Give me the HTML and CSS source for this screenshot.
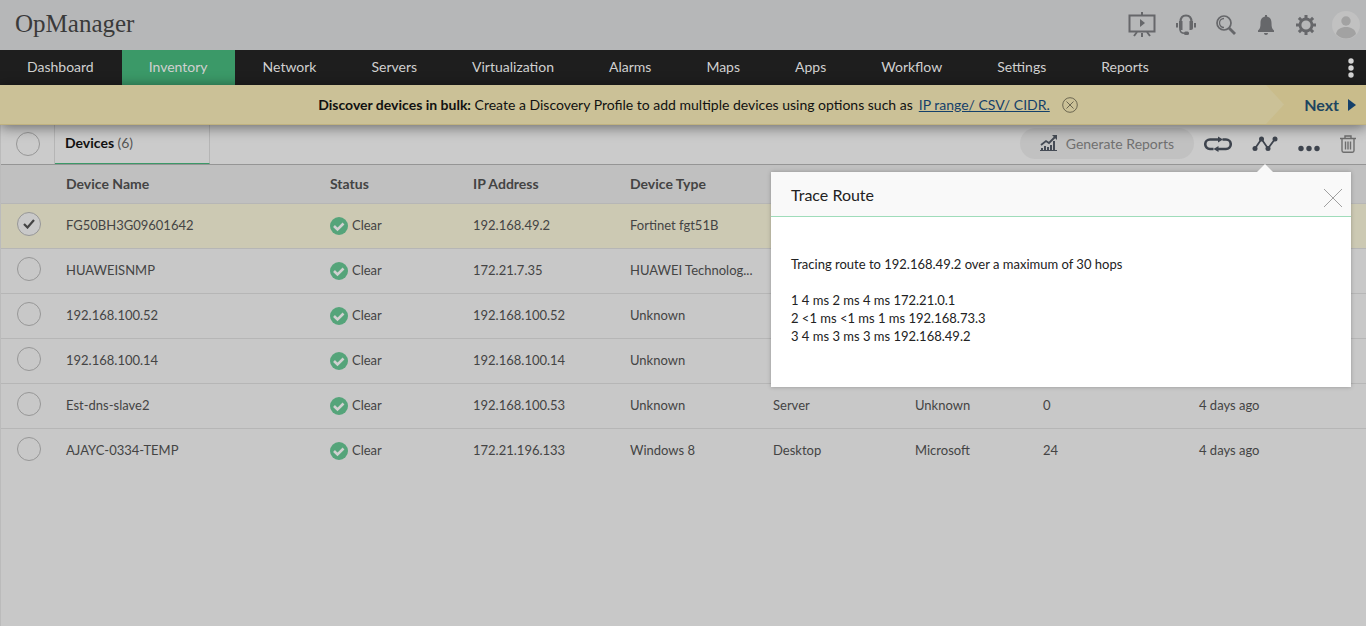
FILE: index.html
```
<!DOCTYPE html>
<html lang="en">
<head>
    <meta charset="UTF-8">
    <meta name="viewport" content="width=device-width, initial-scale=1.0">
    <title>OpManager</title>
    <link rel="stylesheet" href="styles.css">
</head>
<body>

    <!-- Top bar -->
    <header class="topbar">
        <div class="brand">OpManager</div>
        <div class="top-icons">
            <button type="button" class="icon-btn" aria-label="Presentation">
                <svg width="28" height="26" viewBox="0 0 28 26"><path d="M1.500 3.500h25v16h-25z" fill="none" stroke="#66676a" stroke-width="2"/><path d="M13 0h2v3h-2zM13 21h2v4h-2zM12 7l5 4-5 4z" fill="#66676a"/><path d="M9 20l-3 4M19 20l3 4" stroke="#66676a" stroke-width="2"/></svg>
            </button>
            <button type="button" class="icon-btn" aria-label="Support">
                <svg width="20" height="22" viewBox="0 0 20 22"><path d="M4.500 8C4.500 3.500 6.500 1.500 10 1.500S15.500 3.500 15.500 8" fill="none" stroke="#66676a" stroke-width="2.200"/><path d="M4 15c0 3 1.500 4.300 4.500 4.300" fill="none" stroke="#66676a" stroke-width="1.600"/><path d="M3 7h3.500v9H5c-1.200 0-2-.8-2-2zM13.500 7H17v7c0 1.200-.8 2-2 2h-1.500zM0 9h2v4.500H0zM18 9h2v4.500h-2z" fill="#66676a"/><rect x="8" y="17.500" width="5" height="3.500" rx="1.500" fill="#66676a"/></svg>
            </button>
            <button type="button" class="icon-btn" aria-label="Search">
                <svg width="20" height="20" viewBox="0 0 20 20"><circle cx="8" cy="8" r="7" fill="none" stroke="#66676a" stroke-width="1.700"/><path d="M8 3.500a4.500 4.500 0 0 0 0 9" fill="none" stroke="#66676a" stroke-width="1.300"/><path d="M13 13l6 6" stroke="#66676a" stroke-width="2.800"/></svg>
            </button>
            <button type="button" class="icon-btn" aria-label="Notifications">
                <svg width="20" height="20" viewBox="0 0 20 20"><path d="M9 0h2v1.500c3.500.8 4.500 3.500 4.500 6.500 0 4 .5 6 2.500 7.500V17H2v-1.500C4 14 4.500 12 4.500 8c0-3 1-5.700 4.500-6.500zM8 18h4c0 1.200-.8 2-2 2s-2-.8-2-2z" fill="#66676a"/></svg>
            </button>
            <button type="button" class="icon-btn" aria-label="Settings">
                <svg width="20" height="20" viewBox="0 0 20 20"><circle cx="10" cy="10" r="6" fill="none" stroke="#66676a" stroke-width="2.800"/><path d="M10 0v4M10 16v4M0 10h4M16 10h4M2.900 2.900l2.900 2.900M14.200 14.200l2.900 2.900M17.100 2.900l-2.900 2.900M5.800 14.200l-2.900 2.900" stroke="#66676a" stroke-width="3"/></svg>
            </button>
        </div>
        <button type="button" class="icon-btn" aria-label="Profile">
            <svg width="28" height="28" viewBox="0 0 28 28"><circle cx="14" cy="14" r="14" fill="#c1c1c1"/><circle cx="14" cy="10" r="4.700" fill="#a2a2a2"/><path d="M4 23c1-5 5-7 10-7s9 2 10 7c-5.500 6-14.500 6-20 0z" fill="#a2a2a2"/></svg>
        </button>
    </header>

    <!-- Main menu -->
    <nav class="menu">
        <a href="#">Dashboard</a>
        <a href="#" class="active">Inventory</a>
        <a href="#">Network</a>
        <a href="#">Servers</a>
        <a href="#">Virtualization</a>
        <a href="#">Alarms</a>
        <a href="#">Maps</a>
        <a href="#">Apps</a>
        <a href="#">Workflow</a>
        <a href="#">Settings</a>
        <a href="#">Reports</a>
        <button type="button" class="icon-btn menu-more" aria-label="More">
            <svg width="6" height="20" viewBox="0 0 6 20"><circle cx="3" cy="3" r="2.700" fill="#d4d4d4"/><circle cx="3" cy="10" r="2.700" fill="#d4d4d4"/><circle cx="3" cy="17" r="2.700" fill="#d4d4d4"/></svg>
        </button>
    </nav>

    <!-- Discovery banner -->
    <div class="banner">
        <div class="banner-text">
            <span><strong>Discover devices in bulk:</strong> Create a Discovery Profile to add multiple devices using options such as</span>
            <a href="#">IP range/ CSV/ CIDR.</a>
            <button type="button" class="icon-btn" aria-label="Dismiss">
                <svg width="16" height="16" viewBox="0 0 16 16" fill="none" stroke="#6b6650"><circle cx="8" cy="8" r="7.300"/><path d="M4.500 4.500l7 7M11.500 4.500l-7 7"/></svg>
            </button>
        </div>
        <button type="button" class="next">Next
            <svg width="8" height="12" viewBox="0 0 8 12"><path d="M0 0l8 6-8 6z" fill="#14406a"/></svg>
        </button>
    </div>

    <main class="inventory">
        <div class="toolbar">
            <div class="select-all"><input type="checkbox" class="check" aria-label="Select all"></div>
            <a href="#" class="tab">Devices <span>(6)</span></a>
            <div class="tools">
                <button type="button" class="report-btn">
                    <svg width="18" height="17" viewBox="0 0 18 17"><path d="M1 10l5-4 3 2 6-6" fill="none" stroke="#454b55" stroke-width="1.800"/><path d="M12 0h5v5zM1 13h2v2H1zM4 11h2v4H4zM7 12h2v3H7zM10 10h2v5h-2zM13 6h2v9h-2zM0 15h17v1H0z" fill="#454b55"/></svg>
                    Generate Reports
                </button>
                <button type="button" class="icon-btn" aria-label="Ping">
                    <svg width="28" height="16" viewBox="0 0 28 16"><path d="M9.500 13H6A4.700 4.700 0 0 1 6 3.500H15M18.500 3.500H22A4.700 4.700 0 0 1 22 13H13" fill="none" stroke="#3e444e" stroke-width="2.600"/><path d="M14 .5l5 3-5 3zM14.500 10l-5 3 5 3z" fill="#3e444e"/></svg>
                </button>
                <button type="button" class="icon-btn" aria-label="Trace Route">
                    <svg width="26" height="16" viewBox="0 0 26 16"><path d="M3 12.500L9.500 3 16 12.500 23 3" fill="none" stroke="#3e444e" stroke-width="1.800"/><circle cx="3" cy="12.500" r="2.500" fill="#3e444e"/><circle cx="9.500" cy="3" r="2.500" fill="#3e444e"/><circle cx="16" cy="12.500" r="2.500" fill="#3e444e"/><circle cx="23" cy="3" r="2.500" fill="#3e444e"/></svg>
                </button>
                <button type="button" class="icon-btn" aria-label="More actions">
                    <svg width="22" height="16" viewBox="0 0 22 16"><circle cx="3" cy="12.500" r="2.700" fill="#3e444e"/><circle cx="11" cy="12.500" r="2.700" fill="#3e444e"/><circle cx="19" cy="12.500" r="2.700" fill="#3e444e"/></svg>
                </button>
                <button type="button" class="icon-btn" aria-label="Delete">
                    <svg width="16" height="18" viewBox="0 0 16 18" fill="none" stroke="#6e6e6e" stroke-width="1.400"><path d="M0 3.500h16M5 3V1h6v2M2 4v11.500c0 1 .5 1.700 1.500 1.700h9c1 0 1.500-.7 1.500-1.700V4M5.500 6.500v8M8 6.500v8M10.500 6.500v8"/></svg>
                </button>
            </div>
        </div>

        <!-- Device list -->
        <table class="devices">
            <colgroup>
                <col class="col-check">
                <col class="col-name">
                <col class="col-status">
                <col class="col-ip">
                <col class="col-type">
                <col class="col-category">
                <col class="col-vendor">
                <col class="col-count">
                <col>
            </colgroup>
            <thead>
                <tr>
                    <th></th>
                    <th>Device Name</th>
                    <th>Status</th>
                    <th>IP Address</th>
                    <th>Device Type</th>
                    <th></th>
                    <th></th>
                    <th></th>
                    <th></th>
                </tr>
            </thead>
            <tbody>
                <tr class="selected">
                    <td><input type="checkbox" class="check" aria-label="FG50BH3G09601642" checked></td>
                    <td>FG50BH3G09601642</td>
                    <td><span class="status">Clear</span></td>
                    <td>192.168.49.2</td>
                    <td>Fortinet fgt51B</td>
                    <td></td>
                    <td></td>
                    <td></td>
                    <td></td>
                </tr>
                <tr>
                    <td><input type="checkbox" class="check" aria-label="HUAWEISNMP"></td>
                    <td>HUAWEISNMP</td>
                    <td><span class="status">Clear</span></td>
                    <td>172.21.7.35</td>
                    <td>HUAWEI Technolog...</td>
                    <td></td>
                    <td></td>
                    <td></td>
                    <td></td>
                </tr>
                <tr>
                    <td><input type="checkbox" class="check" aria-label="192.168.100.52"></td>
                    <td>192.168.100.52</td>
                    <td><span class="status">Clear</span></td>
                    <td>192.168.100.52</td>
                    <td>Unknown</td>
                    <td></td>
                    <td></td>
                    <td></td>
                    <td></td>
                </tr>
                <tr>
                    <td><input type="checkbox" class="check" aria-label="192.168.100.14"></td>
                    <td>192.168.100.14</td>
                    <td><span class="status">Clear</span></td>
                    <td>192.168.100.14</td>
                    <td>Unknown</td>
                    <td></td>
                    <td></td>
                    <td></td>
                    <td></td>
                </tr>
                <tr>
                    <td><input type="checkbox" class="check" aria-label="Est-dns-slave2"></td>
                    <td>Est-dns-slave2</td>
                    <td><span class="status">Clear</span></td>
                    <td>192.168.100.53</td>
                    <td>Unknown</td>
                    <td>Server</td>
                    <td>Unknown</td>
                    <td>0</td>
                    <td>4 days ago</td>
                </tr>
                <tr>
                    <td><input type="checkbox" class="check" aria-label="AJAYC-0334-TEMP"></td>
                    <td>AJAYC-0334-TEMP</td>
                    <td><span class="status">Clear</span></td>
                    <td>172.21.196.133</td>
                    <td>Windows 8</td>
                    <td>Desktop</td>
                    <td>Microsoft</td>
                    <td>24</td>
                    <td>4 days ago</td>
                </tr>
            </tbody>
        </table>

        <!-- Trace route popup -->
        <section class="popup" role="dialog" aria-labelledby="popupTitle">
            <div class="popup-head">
                <h2 id="popupTitle">Trace Route</h2>
                <button type="button" class="icon-btn" aria-label="Close">
                    <svg width="20" height="20" viewBox="0 0 20 20"><path d="M1 1l18 18M19 1L1 19" stroke="#a0a0a0"/></svg>
                </button>
            </div>
            <div class="popup-body">
                <p>Tracing route to 192.168.49.2 over a maximum of 30 hops</p>
                <p>1 4 ms 2 ms 4 ms 172.21.0.1<br>
                2 &lt;1 ms &lt;1 ms 1 ms 192.168.73.3<br>
                3 4 ms 3 ms 3 ms 192.168.49.2</p>
            </div>
        </section>
    </main>

</body>
</html>
```
FILE: styles.css
```
* {
    box-sizing: border-box;
}

body {
    display: flex;
    flex-direction: column;
    min-height: 100vh;
    margin: 0;
    font-family: Lato, "Liberation Sans", sans-serif;
    font-size: 14px;
    line-height: 18px;
    color: #444;
    background-color: #c8c8c8;
}

button {
    padding: 0;
    border: none;
    background: none;
    font-family: inherit;
    cursor: pointer;
}

.icon-btn {
    display: flex;
    flex-shrink: 0;
}

/* Top bar */
.topbar {
    display: flex;
    align-items: center;
    gap: 16px;
    height: 50px;
    padding: 0 6px 0 15px;
    background-color: #b6b7b8;
}

.brand {
    flex: 1;
    padding-bottom: 3px;
    font-family: "Roboto Slab", "Liberation Serif", serif;
    font-size: 25px;
    font-weight: 300;
    line-height: 30px;
    color: #3a3a3a;
}

.top-icons {
    display: flex;
    align-items: center;
    gap: 20px;
}

/* Main menu */
.menu {
    display: flex;
    gap: 1px;
    height: 35px;
    padding-right: 12px;
    background-color: #1e1e1e;
}

.menu a {
    padding: 0 27px;
    font-size: 14px;
    line-height: 34px;
    color: #d0d0d0;
    text-decoration: none;
}

.menu a.active {
    background-color: #3b9968;
}

.menu-more {
    align-items: center;
    margin-left: auto;
}

/* Discovery banner */
.banner {
    position: relative;
    z-index: 1;
    display: grid;
    grid-template-columns: 130px 1fr 100px;
    height: 40px;
    background-color: #cbc197;
    border-bottom: 1px solid #c0b27f;
    box-shadow: 0 2px 14px rgba(0, 0, 0, 0.5);
    color: #111;
}

.banner-text {
    grid-column: 2;
    display: flex;
    align-items: center;
    justify-content: center;
    gap: 6px;
    white-space: nowrap;
}

.banner-text a {
    margin-right: 6px;
    color: #14406a;
}

.next {
    display: flex;
    align-items: center;
    justify-content: flex-end;
    gap: 9px;
    padding-right: 10px;
    font-size: 16px;
    font-weight: bold;
    color: #1d4560;
    background-color: #c9bc8b;
    clip-path: polygon(0 0, 100% 0, 100% 100%, 0 100%, 18px 50%);
}

/* Toolbar */
.inventory {
    position: relative;
    flex: 1;
    border-left: 1px solid #bbb;
}

.toolbar {
    display: flex;
    height: 40px;
    border-bottom: 1px solid #959595;
    background-color: #cbcbcb;
}

.select-all {
    display: flex;
    align-items: center;
    width: 54px;
    padding: 0 0 2px 15px;
    border-right: 1px solid #b5b5b5;
}

.tab {
    width: 155px;
    padding: 9px 10px;
    border-right: 1px solid #b5b5b5;
    border-bottom: 1px solid #3b9968;
    font-weight: bold;
    color: #111;
    text-decoration: none;
}

.tab span {
    font-weight: normal;
    color: #555;
}

.tools {
    display: flex;
    align-items: center;
    gap: 20px;
    margin-left: auto;
    padding: 0 10px 2px 0;
}

.report-btn {
    display: flex;
    align-items: center;
    gap: 8px;
    height: 31px;
    margin-right: -10px;
    padding: 0 20px;
    border-radius: 16px;
    font-size: 14px;
    color: #707070;
    background-color: #c1c1c1;
}

.check {
    appearance: none;
    display: block;
    width: 24px;
    height: 24px;
    margin: 0;
    border: 1px solid #979797;
    border-radius: 50%;
}

.check:checked {
    background: #c9c9c9 url("data:image/svg+xml,%3Csvg xmlns='http://www.w3.org/2000/svg' viewBox='0 0 12 10'%3E%3Cpath d='M1 5l3.500 3.500L11 1' fill='none' stroke='%23444' stroke-width='2.200'/%3E%3C/svg%3E") center / 12px 10px no-repeat;
}

/* Device list */
.devices {
    width: 100%;
    table-layout: fixed;
    border-collapse: collapse;
}

.col-check { width: 65px; }
.col-name { width: 264px; }
.col-status { width: 143px; }
.col-ip { width: 157px; }
.col-type { width: 143px; }
.col-category { width: 142px; }
.col-vendor { width: 128px; }
.col-count { width: 156px; }

.devices th {
    height: 38px;
    padding: 0;
    font-weight: bold;
    text-align: left;
    background-color: #c0c0c0;
}

.devices td {
    height: 45px;
    padding: 0 0 2px;
    border-top: 1px solid #b6b6b6;
    font-size: 13px;
    white-space: nowrap;
}

.devices td:first-child {
    padding: 0 0 4px 16px;
}

.devices .selected {
    background-color: #ccc9b3;
}

.status {
    display: flex;
    align-items: center;
    gap: 4px;
}

.status::before {
    content: "";
    width: 18px;
    height: 18px;
    margin-top: 2px;
    background: url("data:image/svg+xml,%3Csvg xmlns='http://www.w3.org/2000/svg' viewBox='0 0 18 18'%3E%3Ccircle cx='9' cy='9' r='9' fill='%2355a47a'/%3E%3Cpath d='M4 9l3.500 3.500L13.500 6.500' fill='none' stroke='%23d0d0d0' stroke-width='2.600'/%3E%3C/svg%3E");
}

/* Trace route popup */
.popup {
    position: absolute;
    top: 47px;
    right: 15px;
    width: 580px;
    color: #222;
    background-color: #fff;
    box-shadow: 0 0 4px rgba(0, 0, 0, 0.25);
}

.popup::before {
    content: "";
    position: absolute;
    top: -8px;
    right: 78px;
    border: 8px solid transparent;
    border-top: 0;
    border-bottom-color: #f9f9f9;
}

.popup-head {
    display: flex;
    align-items: center;
    justify-content: space-between;
    height: 45px;
    padding: 2px 8px 0 20px;
    border-bottom: 1px solid #9fdcba;
    background-color: #f9f9f9;
}

.popup-head h2 {
    margin: 0;
    font-size: 16px;
    font-weight: normal;
}

.popup-head .icon-btn {
    padding-top: 6px;
}

.popup-body {
    padding: 38px 20px 24px;
    font-size: 13px;
}

.popup-body p {
    margin: 0 0 18px;
}
```
